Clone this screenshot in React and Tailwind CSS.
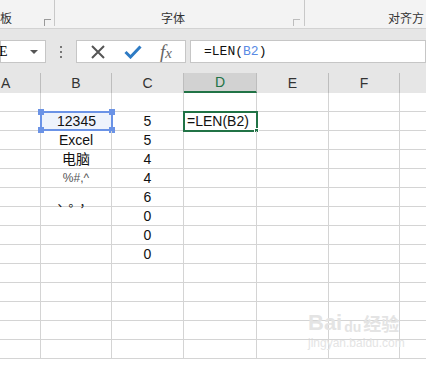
import React from 'react';

const cols = [
  { key: 'A', w: 'w-[41px]', label: 'A', cls: 'justify-start pl-[1px]' },
  { key: 'B', w: 'w-[71px]', label: 'B', cls: 'justify-center' },
  { key: 'C', w: 'w-[72px]', label: 'C', cls: 'justify-center' },
  { key: 'D', w: 'w-[73px]', label: 'D', cls: 'justify-center' },
  { key: 'E', w: 'w-[72px]', label: 'E', cls: 'justify-center' },
  { key: 'F', w: 'w-[71px]', label: 'F', cls: 'justify-center' },
  { key: 'G', w: 'flex-1', label: '', cls: '' },
];

const rows = [
  { b: '', c: '' },
  { b: '12345', c: '5', sel: true },
  { b: 'Excel', c: '5' },
  { b: '电脑', c: '4' },
  { b: '%#,^', c: '4', small: true },
  { b: '、。，', c: '6', low: true },
  { b: '', c: '0' },
  { b: '', c: '0' },
  { b: '', c: '0' },
  { b: '', c: '' },
  { b: '', c: '' },
  { b: '', c: '' },
  { b: '', c: '' },
  { b: '', c: '' },
];

function Handle({ pos }) {
  return <span className={`absolute w-[6px] h-[6px] bg-[#6b93e6] ${pos}`} />;
}

export default function App() {
  const font = { fontFamily: '"Liberation Sans", "Noto Sans CJK SC", sans-serif' };
  return (
    <div className="w-[426px] h-[368px] overflow-hidden bg-white relative" style={font}>
      {/* Ribbon strip */}
      <div className="h-[29px] bg-[#f3f3f3] border-b border-[#d2d2d2] flex text-[12px] text-[#333]">
        <div className="w-[55px] border-r border-[#c8c8c8] h-[26px] relative">
          <span className="absolute left-0 top-[13px] leading-none">板</span>
          <span className="absolute left-[44px] top-[19px] w-[7px] h-[7px] border-l border-t border-[#9a9a9a]" />
        </div>
        <div className="w-[250px] border-r border-[#c8c8c8] h-[26px] relative">
          <span className="absolute left-[106px] top-[13px] leading-none">字体</span>
          <span className="absolute left-[238px] top-[19px] w-[7px] h-[7px] border-l border-t border-[#bdbdbd]" />
        </div>
        <div className="flex-1 relative">
          <span className="absolute left-[83px] top-[13px] leading-none whitespace-nowrap">对齐方</span>
        </div>
      </div>

      {/* Formula bar */}
      <div className="h-[44px] bg-[#e6e6e6] flex items-start pt-[11px]">
        <div className="w-[46px] h-[23px] bg-white border border-[#c6c6c6] flex items-center justify-between pr-[7px]">
          <span className="text-[14px] leading-none -ml-[2px]" style={{ fontFamily: '"Liberation Serif", serif' }}>E</span>
          <span className="w-0 h-0 border-l-[4px] border-r-[4px] border-t-[4px] border-l-transparent border-r-transparent border-t-[#555]" />
        </div>
        <div className="w-[30px] h-[23px] flex flex-col items-center justify-center gap-[3px]">
          <span className="w-[2px] h-[2px] bg-[#777]" />
          <span className="w-[2px] h-[2px] bg-[#777]" />
          <span className="w-[2px] h-[2px] bg-[#777]" />
        </div>
        <div className="w-[110px] h-[23px] bg-white border border-[#c6c6c6] flex items-center justify-around px-[4px]">
          <svg width="16" height="14" viewBox="0 0 16 14">
            <path d="M2 1 L14 13 M14 1 L2 13" stroke="#555" strokeWidth="2" />
          </svg>
          <svg width="18" height="14" viewBox="0 0 18 14">
            <path d="M1.5 7 L6.5 12 L16.5 1.5" stroke="#2e7bc4" strokeWidth="3" fill="none" />
          </svg>
          <span className="text-[19px] italic leading-none text-[#666]" style={{ fontFamily: '"Liberation Serif", serif' }}>
            f<span className="text-[15px]">x</span>
          </span>
        </div>
        <div className="w-[4px]" />
        <div className="flex-1 h-[23px] bg-white border border-[#c6c6c6] flex items-center pl-[13px] text-[13px]" style={{ fontFamily: '"Liberation Mono", monospace' }}>
          <span className="text-[#111]">=LEN(</span>
          <span className="text-[#5a8ae4]">B2</span>
          <span className="text-[#111]">)</span>
        </div>
      </div>

      {/* Column headers */}
      <div className="h-[20px] bg-[#e6e6e6] flex text-[14px] text-[#333]">
        {cols.map((c) => (
          <div
            key={c.key}
            className={`${c.w} h-full flex items-center ${c.cls} ${c.key === 'G' ? '' : 'border-r border-[#bdbdbd]'} ${c.key === 'D' ? 'bg-[#d2d2d2] border-b-2 border-b-[#217346] text-[#217346]' : ''}`}
          >
            {c.label}
          </div>
        ))}
      </div>

      {/* Grid */}
      <div className="flex flex-col text-[14px] text-[#111]">
        {rows.map((r, i) => (
          <div key={i} className="h-[19px] flex border-b border-[#d4d4d4]">
            <div className="w-[41px] border-r border-[#d4d4d4]" />
            <div className="w-[71px] border-r border-[#d4d4d4] relative flex items-center justify-center">
              {r.sel ? (
                <div className="absolute -left-[1px] -top-[1px] w-[73px] h-[20px] border-2 border-[#6b93e6] bg-[#eef3fc] flex items-center justify-center">
                  <span>{r.b}</span>
                  <Handle pos="-left-[4px] -top-[4px]" />
                  <Handle pos="-right-[4px] -top-[4px]" />
                  <Handle pos="-left-[4px] -bottom-[4px]" />
                  <Handle pos="-right-[4px] -bottom-[4px]" />
                </div>
              ) : r.small ? (
                <span className="text-[12px] text-[#555] leading-none">{r.b}</span>
              ) : r.low ? (
                <span className="text-[12px] leading-none translate-y-[6px] tracking-[5px] ml-[2px]">{r.b}</span>
              ) : (
                <span>{r.b}</span>
              )}
            </div>
            <div className="w-[72px] border-r border-[#d4d4d4] flex items-center justify-center">{r.c}</div>
            <div className="w-[73px] border-r border-[#d4d4d4] relative">
              {r.sel && (
                <div className="absolute -left-[1px] -top-[1px] w-[75px] h-[21px] border-2 border-[#217346] flex items-center pl-[2px] bg-white">
                  <span>=LEN(B2)</span>
                  <span className="absolute -right-[3px] -bottom-[3px] w-[5px] h-[5px] bg-[#217346] border border-white" />
                </div>
              )}
            </div>
            <div className="w-[72px] border-r border-[#d4d4d4]" />
            <div className="w-[71px] border-r border-[#d4d4d4]" />
            <div className="flex-1" />
          </div>
        ))}
      </div>

      {/* watermark */}
      <div className="absolute left-[308px] top-[312px] pointer-events-none text-[#e4e4e4] leading-none select-none">
        <div className="flex items-end gap-[2px] text-[22px] font-bold">
          <span>Bai</span>
          <span className="text-[14px]">du</span>
          <span className="text-[18px]">经验</span>
        </div>
        <div className="text-[12px] mt-[3px]">jingyan.baidu.com</div>
      </div>
    </div>
  );
}
